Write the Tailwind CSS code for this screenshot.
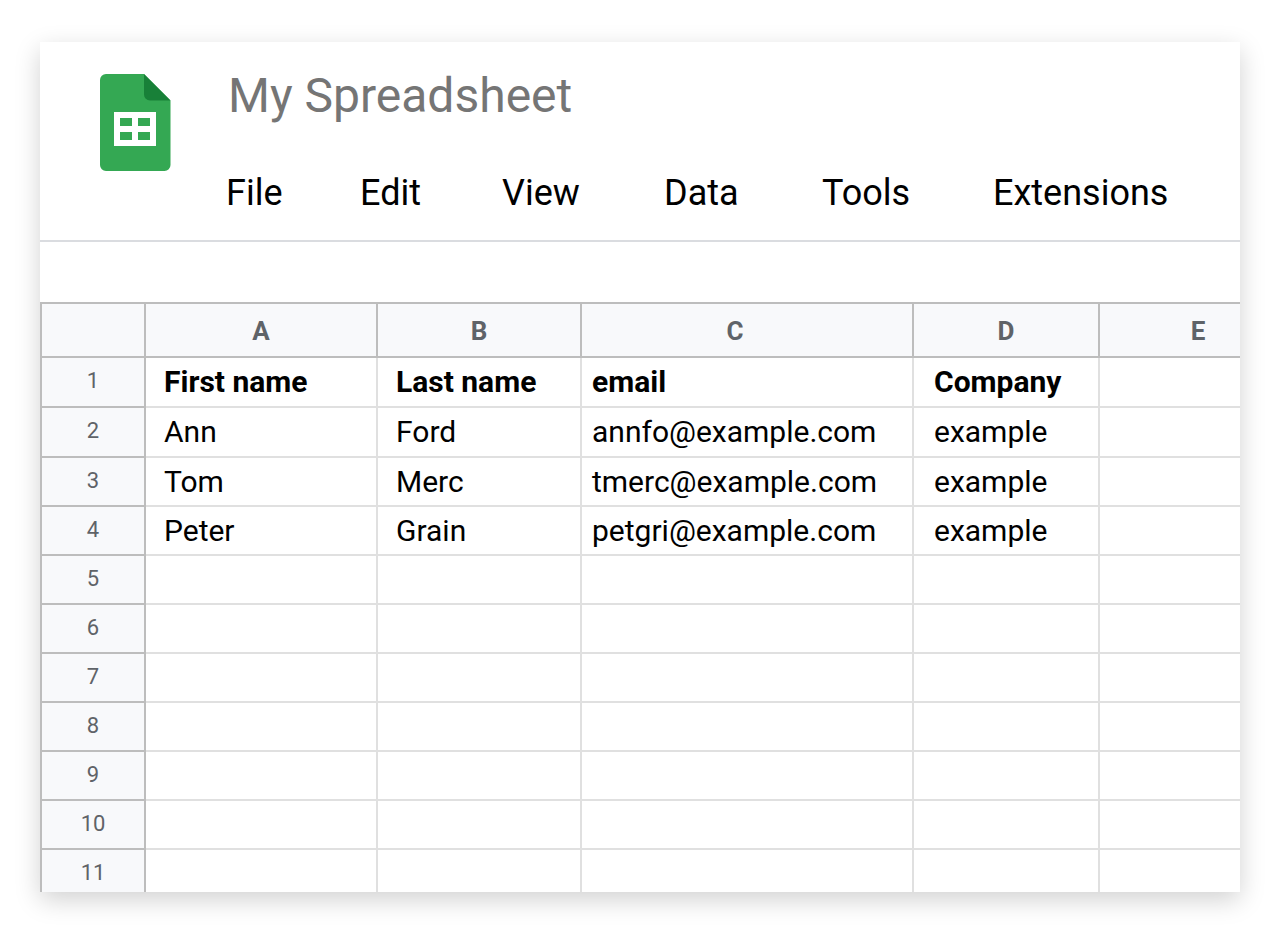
<!DOCTYPE html>
<html lang="en">
<head>
<meta charset="utf-8">
<meta name="viewport" content="width=device-width, initial-scale=1">
<title>My Spreadsheet</title>
<script src="https://cdn.jsdelivr.net/npm/@tailwindcss/browser@4"></script>
</head>
<body class="flex h-screen flex-col bg-white px-10 pt-[42px] pb-10 font-[Roboto,sans-serif] text-black">
<main class="flex min-h-0 flex-1 flex-col overflow-hidden bg-white shadow-[0_8px_24px_rgba(0,0,0,0.18)]">
  <header class="flex shrink-0 border-b-2 border-[#dadce0] pt-[26px] pb-[23px] pl-[60px]">
    <svg class="mt-[6px] h-[97px] w-[71px] shrink-0" viewBox="0 0 71 97" aria-label="Sheets" role="img">
      <path fill="#34a853" d="M6 0H44L70.500 26.500V91a6 6 0 0 1-6 6H6a6 6 0 0 1-6-6V6a6 6 0 0 1 6-6z"/>
      <path fill="#188038" d="M44 0L70.500 26.500H50a6 6 0 0 1-6-6z"/>
      <path fill="#fff" fill-rule="evenodd" d="M14 38H56V72H14zM20 44V52H32V44zM38 44V52H50V44zM20 58V66H32V58zM38 58V66H50V58z"/>
    </svg>
    <div class="ml-[55px] flex min-w-0 flex-1 flex-col">
      <input class="ml-[2px] h-14 w-full text-[48px] leading-[56px] text-[#757575] outline-none" aria-label="Spreadsheet name" value="My Spreadsheet">
      <nav class="mt-[45px] grid grid-cols-[134px_142px_162px_158px_171px_auto] justify-start text-[36px] leading-[48px]" aria-label="Menu">
        <button class="text-left">File</button>
        <button class="text-left">Edit</button>
        <button class="text-left">View</button>
        <button class="text-left">Data</button>
        <button class="text-left">Tools</button>
        <button class="text-left">Extensions</button>
      </nav>
    </div>
  </header>
  <div class="mt-[60px] min-h-0 flex-1 overflow-hidden">
    <table class="w-[calc(100%+58px)] table-fixed border-separate border-spacing-0 border-t-2 border-l-2 border-[#bdbdbd] text-[30px] leading-[36px] [&_td]:border-r-2 [&_td]:border-b-2 [&_td]:border-[#e0e0e0] [&_td]:p-0 [&_td]:pl-[18px] [&_td:nth-child(4)]:pl-[10px] [&_td:nth-child(5)]:pl-5 [&_th]:border-r-2 [&_th]:border-b-2 [&_th]:border-[#bdbdbd] [&_th]:bg-[#f8f9fb] [&_th]:p-0 [&_th]:text-[#5f6368] [&_thead_th]:pt-[2px] [&_tbody_th]:pb-[2px] [&_tbody_th]:text-[22px] [&_tbody_th]:leading-[28px] [&_tbody_th]:font-normal [&_tbody_tr]:h-[49px]">
      <colgroup>
        <col class="w-[104px]"><col class="w-[232px]"><col class="w-[204px]"><col class="w-[332px]"><col class="w-[186px]"><col>
      </colgroup>
      <thead>
        <tr class="h-[54px] text-[26px] leading-[32px]">
          <th aria-label="Select all"></th><th scope="col">A</th><th scope="col">B</th><th scope="col"><span class="pr-6">C</span></th><th scope="col">D</th><th scope="col">E</th>
        </tr>
      </thead>
      <tbody>
        <tr class="h-[50px]! font-bold"><th scope="row">1</th><td>First name</td><td>Last name</td><td>email</td><td>Company</td><td></td></tr>
        <tr class="h-[50px]!"><th scope="row">2</th><td>Ann</td><td>Ford</td><td>annfo@example.com</td><td>example</td><td></td></tr>
        <tr><th scope="row">3</th><td>Tom</td><td>Merc</td><td>tmerc@example.com</td><td>example</td><td></td></tr>
        <tr><th scope="row">4</th><td>Peter</td><td>Grain</td><td>petgri@example.com</td><td>example</td><td></td></tr>
        <tr><th scope="row">5</th><td></td><td></td><td></td><td></td><td></td></tr>
        <tr><th scope="row">6</th><td></td><td></td><td></td><td></td><td></td></tr>
        <tr><th scope="row">7</th><td></td><td></td><td></td><td></td><td></td></tr>
        <tr><th scope="row">8</th><td></td><td></td><td></td><td></td><td></td></tr>
        <tr><th scope="row">9</th><td></td><td></td><td></td><td></td><td></td></tr>
        <tr><th scope="row">10</th><td></td><td></td><td></td><td></td><td></td></tr>
        <tr><th scope="row">11</th><td></td><td></td><td></td><td></td><td></td></tr>
      </tbody>
    </table>
  </div>
</main>
</body>
</html>
